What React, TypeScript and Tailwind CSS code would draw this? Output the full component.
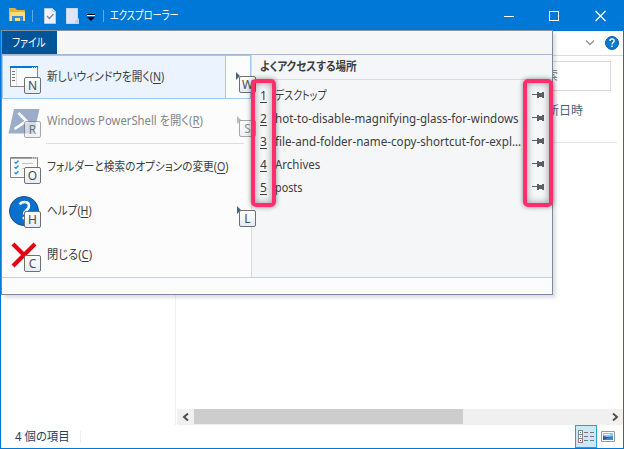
import { useLayoutEffect, useRef, type ReactNode } from 'react';

/** Condenses a one-line label to the given width, like the proportional UI kana. */
function Fit({ width, className = '', children }: { width: number; className?: string; children: ReactNode }) {
  const ref = useRef<HTMLSpanElement>(null);
  useLayoutEffect(() => {
    const fit = () => {
      const el = ref.current;
      if (el && el.offsetWidth) el.style.transform = `scaleX(${width / el.offsetWidth})`;
    };
    fit();
    document.fonts.ready.then(fit);
  }, [width]);
  return (
    <span className={`block shrink-0 whitespace-nowrap ${className}`} style={{ width }}>
      <span ref={ref} className="inline-block origin-left whitespace-nowrap [font-feature-settings:'palt']">
        {children}
      </span>
    </span>
  );
}

function KeyTip({ k, faded = false, className = '' }: { k: string; faded?: boolean; className?: string }) {
  return (
    <span
      className={`absolute flex h-[17px] w-[17px] items-center justify-center rounded-[2px] border border-[#707070] bg-gradient-to-b from-white to-[#e4ecf7] text-[12px] leading-none text-[#4c4c4c] ${faded ? 'opacity-60' : ''} ${className}`}
    >
      {k}
    </span>
  );
}

function WindowIcon() {
  return (
    <svg width="30" height="22" viewBox="0 0 30 22" shapeRendering="crispEdges">
      <rect x=".5" y=".5" width="27" height="20" fill="#fafafa" stroke="#858585" />
      <rect width="28" height="2" fill="#0078d7" />
      <path d="M22 1h1M24 1h1M26 1h1" stroke="#fff" />
      <path d="M6.5 2v18" stroke="#ddd" />
      <path d="M2 5.5h3M2 8.5h3M2 11.5h3M2 14.5h3" stroke="#777" />
    </svg>
  );
}

function ShellIcon() {
  return (
    <svg width="32" height="25" viewBox="0 0 32 25">
      <path d="M6 0h25.5L26 24.5H.5z" fill="#9cadc9" />
      <path d="M10.5 4l8 8-12 8" fill="none" stroke="#fff" strokeWidth="2.7" />
    </svg>
  );
}

function OptionsIcon() {
  return (
    <svg width="28" height="21" viewBox="0 0 28 21">
      <path d="M.5.5h27v20H.5z" fill="#fafafa" stroke="#858585" />
      <path d="M1 1h26" stroke="#888" strokeWidth="1.5" />
      <path d="M22 1h1m1 0h1m1 0h1" stroke="#fff" />
      <path d="M4.500 5l1.500 1.300L8.500 3.500M4.500 10l1.500 1.300L8.500 8.500M4.500 15.500L6 16.800l2.500-2.800" fill="none" stroke="#2a8fd4" strokeWidth="1.400" />
      <path d="M12 6.500h11M12 11.500h11" stroke="#c2c2c2" />
    </svg>
  );
}

function HelpIcon() {
  return (
    <svg width="30" height="30" viewBox="0 0 30 30">
      <circle cx="15" cy="15" r="14.500" fill="#0871ce" stroke="#144d83" />
      <path d="M10.800 8.500c1-2 2.700-2.500 4.700-2.500 3 0 4.500 1.700 4.500 4 0 4-5 4-5 8.500" fill="none" stroke="#fff" strokeWidth="2.600" />
      <circle cx="15" cy="22" r="1.600" fill="#fff" />
    </svg>
  );
}

function CloseIcon() {
  return (
    <svg width="26" height="26" viewBox="0 0 26 26">
      <path d="M2 2l22 22M24 2L2 24" stroke="#e60012" strokeWidth="4.200" />
    </svg>
  );
}

function Item({
  icon, tip, label, width, arrow, height = 'h-[44px]', active = false, disabled = false,
}: {
  icon: ReactNode; tip: string; label: string; width: number; arrow?: string; height?: string; active?: boolean; disabled?: boolean;
}) {
  return (
    <div className={`relative flex shrink-0 items-center ${height} ${active ? 'border border-[#a0c9f5] bg-[#eaf3fe] pl-[5px]' : 'pl-[6px]'}`}>
      <div className="relative flex h-8 w-[39px] items-center">
        <span className={active ? 'pl-[2px]' : tip === 'O' ? 'pl-[2px]' : tip === 'C' ? 'pl-[3px]' : tip === 'H' ? 'pl-[1px]' : ''}>{icon}</span>
        <KeyTip k={tip} faded={disabled} className="left-[16px] top-[16px]" />
      </div>
      <Fit width={width} className={disabled ? 'text-[#858585]' : ''}>
        {label}(<u className="underline-offset-2">{tip}</u>)
      </Fit>
      {active && <div className="absolute inset-y-0 right-0 w-[25px] border-l border-[#a0c9f5] bg-[#fcfcfc]" />}
      {arrow && (
        <>
          <svg className={`absolute right-[10px] top-1/2 -mt-[5px] ${disabled ? 'opacity-40' : ''}`} width="4" height="8">
            <path d="M0 0l4 4-4 4z" fill="#426578" />
          </svg>
          <KeyTip k={arrow} faded={disabled} className={active ? 'right-[-6px] top-[20px] z-10' : 'right-[-5px] top-[21px] z-10'} />
        </>
      )}
    </div>
  );
}

function Pin() {
  return (
    <svg width="13" height="8" viewBox="0 0 13 8" shapeRendering="crispEdges">
      <path d="M0 3h5V1h2v1h3V1h2v6h-2V6H7v1H5V4H0z" fill="#5a6066" />
    </svg>
  );
}

const places: [string, string, number][] = [
  ['1', 'デスクトップ', 52],
  ['2', 'hot-to-disable-magnifying-glass-for-windows', 244],
  ['3', 'file-and-folder-name-copy-shortcut-for-expl...', 246],
  ['4', 'Archives', 45],
  ['5', 'posts', 27],
];

function FileMenu() {
  return (
    <div className="absolute left-0 top-[29px] z-10 flex h-[265px] w-[552px] flex-col border border-[#7889a2] border-t-[#8e9298] bg-[#f5f6f8] shadow-[3px_3px_3px_rgba(0,0,0,0.12)]">
      <div className="flex h-[24px] shrink-0 border-b border-[#a7b5cf]">
        <div className="flex w-[55px] items-center bg-[#005499] pl-[10px] text-white">
          <Fit width={34}>ファイル</Fit>
        </div>
      </div>
      <div className="flex h-[222px] shrink-0">
        <div className="relative z-10 flex w-[250px] shrink-0 flex-col border-r border-[#d8dae0] bg-[#fcfcfc]">
          <Item icon={<WindowIcon />} tip="N" label="新しいウィンドウを開く" width={117} arrow="W" active />
          <Item icon={<ShellIcon />} tip="R" label="Windows PowerShell を開く" width={156} arrow="S" disabled />
          <div className="ml-[44px] mr-[7px] h-[2px] border-t border-[#dedede]" />
          <Item icon={<OptionsIcon />} tip="O" label="フォルダーと検索のオプションの変更" width={181} />
          <Item icon={<HelpIcon />} tip="H" label="ヘルプ" width={45} arrow="L" />
          <Item icon={<CloseIcon />} tip="C" label="閉じる" width={45} />
        </div>
        <div className="flex min-w-0 grow flex-col">
          <div className="flex h-[25px] items-center border-b border-[#d9dce0] pl-[8px] font-bold">
            <Fit width={97}>よくアクセスする場所</Fit>
          </div>
          <div className="flex flex-col pt-[4px]">
            {places.map(([n, name, width]) => (
              <div key={n} className="flex h-[23px] items-center pl-[8px]">
                <span className="w-[15px] underline underline-offset-2">{n}</span>
                <Fit width={width}>{name}</Fit>
                <span className="mb-[2px] ml-auto mr-[7px]"><Pin /></span>
              </div>
            ))}
          </div>
        </div>
      </div>
      <div className="grow border-t border-[#c2cee2] bg-[#fcfcfc]" />
    </div>
  );
}

export default function App() {
  return (
    <div className="relative flex h-[449px] w-[624px] flex-col overflow-hidden border border-[#0078d7] bg-white font-['Noto_Sans','Noto_Sans_CJK_JP',sans-serif] text-[12px] leading-[18px] text-[#3d3d3d]">
      <header className="flex h-[30px] shrink-0 items-center bg-[#0078d7] text-white">
        <svg className="mb-[2px] ml-[8px]" width="17" height="14" viewBox="0 0 17 14">
          <path d="M0 0h6l2 2h8v11H0z" fill="#e8b13b" />
          <path d="M1 4h15v9H1z" fill="#ffdc75" />
          <path d="M3 13V8h11v5h-3v-3H6v3z" fill="#338fd8" />
        </svg>
        <span className="ml-[6px] h-3 w-px bg-[#65a9df]" />
        <svg className="ml-[11px]" width="12" height="16" viewBox="0 0 12 16">
          <path d="M.5.5h8l3 3v12H.5z" fill="#eef3fb" stroke="#b7cae6" />
          <path d="M8.500.5v3h3" fill="none" stroke="#b7cae6" />
          <path d="M3 8l2.300 2.500L9.500 6" fill="none" stroke="#76869b" strokeWidth="1.200" />
        </svg>
        <svg className="ml-[10px]" width="14" height="16" viewBox="0 0 14 16">
          <path d="M.5.5h11v15H.5z" fill="#dce6f6" stroke="#c5d5ed" />
          <path d="M9 16v-3l4-3v6z" fill="#bdd0ed" />
        </svg>
        <svg className="ml-[7px] mt-[3px]" width="8" height="7" viewBox="0 0 8 7">
          <path d="M0 .5h8" stroke="#000" /><path d="M0 1.500h8" stroke="#fff" />
          <path d="M0 3h8L4 7z" fill="#000" />
        </svg>
        <span className="ml-[8px] h-3 w-px bg-[#65a9df]" />
        <Fit width={69} className="ml-[6px]">エクスプローラー</Fit>
        <div className="ml-auto flex items-center pr-[11px]">
          <svg width="108" height="12" viewBox="0 0 108 12">
            <path d="M0 6.500h10M45.500 1.500h9v9h-9z" fill="none" stroke="#fff" shapeRendering="crispEdges" />
            <path d="M91.500 1l10 10m0-10l-10 10" stroke="#fff" strokeWidth="1.200" />
          </svg>
        </div>
      </header>
      <div className="flex h-[25px] shrink-0 items-center justify-end gap-[10px] border-b border-[#dadbdc] pr-[4px]">
        <svg width="10" height="6"><path d="M1 .5l4 4 4-4" fill="none" stroke="#929292" strokeWidth="1.300" /></svg>
        <svg width="14" height="14" viewBox="0 0 14 14">
          <circle cx="7" cy="7" r="6.500" fill="#0878d0" stroke="#0d5ba3" />
          <path d="M5 5c0-1.500 1-2 2-2s2.200.5 2.200 1.800C9.200 6.500 7 6.500 7 8.500M7 9.500V11" fill="none" stroke="#fff" strokeWidth="1.400" />
        </svg>
      </div>
      <div className="flex h-[40px] shrink-0 justify-end pr-[12px] pt-[5px]">
        <div className="flex h-[30px] w-[140px] items-center justify-end border border-[#d9d9d9] pr-[52px] text-[#777]">検索</div>
      </div>
      <div className="flex min-h-0 grow">
        <div className="w-[175px] shrink-0 border-r border-[#f0f0f0]" />
        <div className="flex grow flex-col">
          <div className="mr-[6px] flex h-[47px] justify-end border-b border-[#e5e5e5] pr-[34px] pt-[6px] text-[#4c607a]">更新日時</div>
          <div className="grow" />
          <div className="ml-px flex h-[16px] shrink-0 bg-[#f0f0f0]">
            <div className="flex w-[17px] items-center justify-center">
              <svg width="7" height="8"><path d="M6 .5L2 4l4 3.500" fill="none" stroke="#505050" strokeWidth="2" /></svg>
            </div>
            <div className="h-[15px] w-[269px] bg-[#cdcdcd]" />
            <div className="ml-auto flex w-[17px] items-center justify-center pl-px">
              <svg width="7" height="8"><path d="M1 .5L5 4 1 7.500" fill="none" stroke="#505050" strokeWidth="2" /></svg>
            </div>
          </div>
        </div>
      </div>
      <footer className="flex h-[23px] shrink-0 items-center pl-[14px] text-[#263f60]">
        <Fit width={55}>4 個の項目</Fit>
        <span className="ml-[10px] h-3 w-px bg-[#eee]" />
        <div className="ml-auto flex h-[23px] w-[22px] items-center justify-center border border-[#26a0da] bg-[#cce8f6]">
          <svg width="16" height="14" viewBox="0 0 16 14" shapeRendering="crispEdges">
            <path d="M.5.5h4v12h-4zM0 4.500h5M0 8.500h5" fill="#fff" stroke="#888" />
            <path d="M6 2.500h4m2 0h4M6 6.500h4m2 0h4M6 10.500h4m2 0h4" stroke="#777" />
            <path d="M2 2h1v1H2zM2 6h1v1H2z" fill="#2686bb" /><path d="M2 10h1v1H2z" fill="#d33" />
          </svg>
        </div>
        <svg className="ml-[4px] mr-[8px]" width="14" height="11" viewBox="0 0 14 11">
          <path d="M.5.5h13v10H.5z" fill="#fff" stroke="#999" />
          <path d="M2 2h10v7H2z" fill="#8fc7f3" />
          <path d="M2 5l4 1 6-.5V9H2z" fill="#25627d" /><path d="M6 7l6-1v3H3z" fill="#4389bd" />
          <path d="M3 3.500h6" stroke="#e5f4ff" />
        </svg>
      </footer>
      <FileMenu />
      <div className="absolute left-[250px] top-[78px] z-20 h-[128px] w-[25px] rounded-[5px] border-4 border-[#ff2d6b] shadow-[0_0_5px_rgba(0,0,0,0.45),inset_0_0_7px_rgba(0,0,0,0.4)]" />
      <div className="absolute left-[522px] top-[78px] z-20 h-[128px] w-[30px] rounded-[5px] border-4 border-[#ff2d6b] shadow-[0_0_5px_rgba(0,0,0,0.45),inset_0_0_7px_rgba(0,0,0,0.4)]" />
    </div>
  );
}
